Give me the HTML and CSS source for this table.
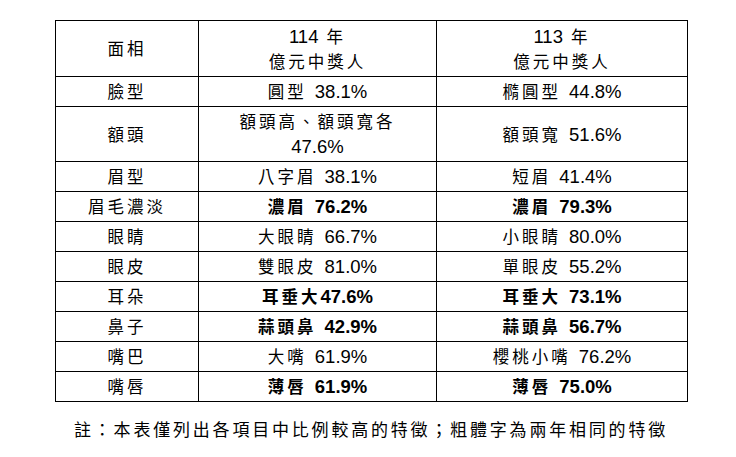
FILE: index.html
```html
<!DOCTYPE html>
<html lang="zh-Hant">
<head>
<meta charset="utf-8">
<link rel="stylesheet" href="styles.css">
</head>
<body>
<div class="page">
  <div class="caption"><span class="zh">表：114年與113年億元中獎人面相特徵比較表</span></div>
  <table class="face">
    <colgroup>
      <col class="c1"><col class="c2"><col class="c3">
    </colgroup>
    <tr class="head">
      <td><span class="zh">面相</span></td>
      <td>114 <span class="zh">年</span><br><span class="zh">億元中獎人</span></td>
      <td>113 <span class="zh">年</span><br><span class="zh">億元中獎人</span></td>
    </tr>
    <tr>
      <td><span class="zh">臉型</span></td>
      <td><span class="zh">圓型</span> 38.1%</td>
      <td><span class="zh">橢圓型</span> 44.8%</td>
    </tr>
    <tr class="two">
      <td><span class="zh">額頭</span></td>
      <td><span class="zh">額頭高、額頭寬各</span><br>47.6%</td>
      <td><span class="zh">額頭寬</span> 51.6%</td>
    </tr>
    <tr>
      <td><span class="zh">眉型</span></td>
      <td><span class="zh">八字眉</span> 38.1%</td>
      <td><span class="zh">短眉</span> 41.4%</td>
    </tr>
    <tr>
      <td><span class="zh">眉毛濃淡</span></td>
      <td class="b"><span class="zh">濃眉</span> 76.2%</td>
      <td class="b"><span class="zh">濃眉</span> 79.3%</td>
    </tr>
    <tr>
      <td><span class="zh">眼睛</span></td>
      <td><span class="zh">大眼睛</span> 66.7%</td>
      <td><span class="zh">小眼睛</span> 80.0%</td>
    </tr>
    <tr>
      <td><span class="zh">眼皮</span></td>
      <td><span class="zh">雙眼皮</span> 81.0%</td>
      <td><span class="zh">單眼皮</span> 55.2%</td>
    </tr>
    <tr>
      <td><span class="zh">耳朵</span></td>
      <td class="b"><span class="zh">耳垂大</span>47.6%</td>
      <td class="b"><span class="zh">耳垂大</span> 73.1%</td>
    </tr>
    <tr>
      <td><span class="zh">鼻子</span></td>
      <td class="b"><span class="zh">蒜頭鼻</span> 42.9%</td>
      <td class="b"><span class="zh">蒜頭鼻</span> 56.7%</td>
    </tr>
    <tr>
      <td><span class="zh">嘴巴</span></td>
      <td><span class="zh">大嘴</span> 61.9%</td>
      <td><span class="zh">櫻桃小嘴</span> 76.2%</td>
    </tr>
    <tr>
      <td><span class="zh">嘴唇</span></td>
      <td class="b"><span class="zh">薄唇</span> 61.9%</td>
      <td class="b"><span class="zh">薄唇</span> 75.0%</td>
    </tr>
  </table>
  <p class="note"><span class="zh">註：本表僅列出各項目中比例較高的特徵；粗體字為兩年相同的特徵</span></p>
</div>
</body>
</html>
```

FILE: styles.css
```css
html, body {
  margin: 0;
  padding: 0;
  background: #ffffff;
}

body {
  font-family: "Liberation Sans", "Noto Sans CJK TC", sans-serif;
  color: #000000;
  overflow: hidden;
}

.page {
  width: 736px;
  height: 457px;
  padding: 0 0 0 55px;
  box-sizing: border-box;
}

.caption {
  margin: -18px 0 0 -15px;
  height: 38px;
  font-size: 16px;
  line-height: 18px;
  color: #333;
}

.zh {
  font-family: "Noto Sans CJK TC", sans-serif;
  letter-spacing: 3px;
  font-size: 16.5px;
}

.face {
  border-collapse: collapse;
  table-layout: fixed;
  width: 632px;
  font-size: 18.5px;
}

.c1 { width: 143px; }
.c2 { width: 238px; }
.c3 { width: 251px; }

.face td {
  border: 1px solid #000000;
  padding: 0;
  height: 29px;
  line-height: 24px;
  text-align: center;
  vertical-align: middle;
  white-space: nowrap;
  word-spacing: 3px;
}

.face tr.head td {
  height: 55px;
  line-height: 25px;
}

.face tr.two td {
  height: 54px;
  line-height: 25px;
}

.face td.b {
  font-weight: bold;
}

.face td.b .zh {
  font-weight: bold;
}

.note {
  width: 632px;
  margin: 16px 0 0 0;
  text-align: center;
  font-size: 16px;
  line-height: 22px;
}

.note .zh {
  font-size: 17px;
  letter-spacing: 2.8px;
}
```
